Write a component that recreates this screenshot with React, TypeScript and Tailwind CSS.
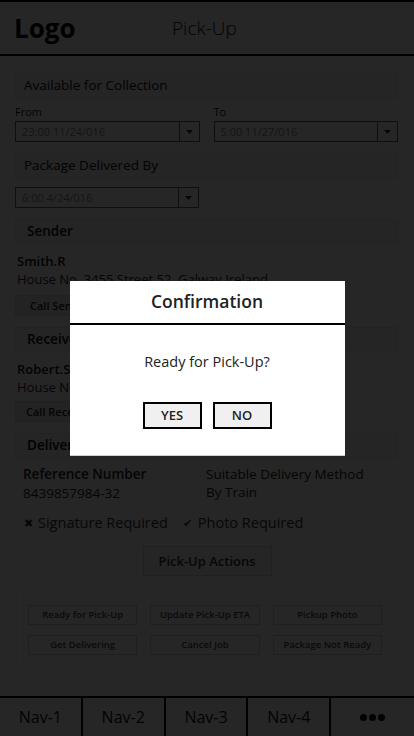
import React from "react";

const font = { fontFamily: "'Open Sans', Lato, 'Liberation Sans', sans-serif" };

function Select({ value }: { value: string }) {
  return (
    <div className="flex h-[21px] border border-[#666] bg-white">
      <div className="flex flex-1 items-center px-[6px] text-[11px] leading-none text-[#8a8a8a]">{value}</div>
      <div className="flex w-[20px] items-center justify-center border-l border-[#666]">
        <svg width="7" height="4" viewBox="0 0 7 4">
          <path d="M0 0 L7 0 L3.5 4 Z" fill="#333" />
        </svg>
      </div>
    </div>
  );
}

function SectionHead({ title, bold = false }: { title: string; bold?: boolean }) {
  return (
    <div
      className={`flex h-[25px] items-center border border-[#ececec] bg-[#f3f3f3] text-[13.5px] leading-none text-[#111] ${
        bold ? "pl-[11px] font-semibold" : "pl-[8px]"
      }`}
    >
      {title}
    </div>
  );
}

function SmallBtn({ label }: { label: string }) {
  return (
    <div className="flex h-[20px] items-center justify-center border border-[#cfcfcf] bg-white text-[9.5px] font-semibold leading-none text-[#444]">
      {label}
    </div>
  );
}

export default function App() {
  return (
    <div className="relative flex h-[736px] w-[414px] flex-col overflow-hidden bg-white" style={font}>
      {/* Header */}
      <div className="flex h-[56px] shrink-0 items-center border-b-2 border-t-2 border-black px-[14px]">
        <div className="w-[124px] text-[26px] font-bold leading-none text-black">Logo</div>
        <div className="ml-[34px] text-[19px] font-light leading-none text-[#111]">Pick-Up</div>
      </div>

      {/* Content */}
      <div className="flex flex-col pl-[15px] pr-[16px] pt-[17px]">
        <SectionHead title="Available for Collection" />
        <div className="mt-[7px] grid grid-cols-2 gap-x-[14px]">
          <div>
            <div className="mb-[3px] text-[11px] leading-[13px] text-[#111]">From</div>
            <Select value="23:00 11/24/016" />
          </div>
          <div>
            <div className="mb-[3px] text-[11px] leading-[13px] text-[#111]">To</div>
            <Select value="5:00 11/27/016" />
          </div>
        </div>

        <div className="mt-[11px]">
          <SectionHead title="Package Delivered By" />
        </div>
        <div className="mt-[9px] w-[184px]">
          <Select value="6:00  4/24/016" />
        </div>

        <div className="mt-[11px]">
          <SectionHead title="Sender" bold />
        </div>
        <div className="mt-[8px] pl-[2px] text-[13px] font-semibold leading-[18px] text-[#111]">Smith.R</div>
        <div className="pl-[2px] text-[13px] leading-[18px] text-[#222]">House No. 3455 Street 52, Galway Ireland</div>
        <div className="mt-[7px] flex h-[21px] w-[100px] items-center border border-[#dcdcdc] bg-[#ececec] pl-[14px] text-[11px] font-semibold leading-none text-[#222]">
          Call Sender
        </div>

        <div className="mt-[11px]">
          <SectionHead title="Receiver" bold />
        </div>
        <div className="mt-[8px] pl-[2px] text-[13px] font-semibold leading-[18px] text-[#111]">Robert.S</div>
        <div className="pl-[2px] text-[13px] leading-[18px] text-[#222]">House No. 12 Street 8, Dublin Ireland</div>
        <div className="mt-[5px] flex h-[21px] w-[100px] items-center border border-[#dcdcdc] bg-[#ececec] pl-[10px] text-[11px] font-semibold leading-none text-[#222]">
          Call Receiver
        </div>

        <div className="mt-[11px]">
          <SectionHead title="Delivery Details" bold />
        </div>
        <div className="mt-[7px] flex pl-[8px]">
          <div className="w-[183px]">
            <div className="text-[13.5px] font-semibold leading-[18px] text-[#222]">Reference Number</div>
            <div className="mt-[1px] text-[13.5px] leading-[18px] text-[#222]">8439857984-32</div>
          </div>
          <div>
            <div className="text-[13.5px] leading-[18px] text-[#222]">Suitable Delivery Method</div>
            <div className="text-[13.5px] leading-[18px] text-[#222]">By Train</div>
          </div>
        </div>
        <div className="mt-[12px] flex h-[18px] items-center pl-[9px] text-[14.5px] leading-[18px] text-[#333]">
          <span className="mr-[5px] text-[11px]">✖</span>
          <span>Signature Required</span>
          <span className="ml-[15px] mr-[6px] text-[11px]">✔</span>
          <span>Photo Required</span>
        </div>
        <div className="mt-[14px] flex justify-center pl-[1px]">
          <div className="flex h-[30px] w-[129px] items-center justify-center border border-[#d6d6d6] bg-[#f3f3f3] text-[13px] font-semibold leading-none text-[#333]">
            Pick-Up Actions
          </div>
        </div>
        <div className="ml-[1px] mt-[15px] border border-[#eeeeee] pb-[13px] pl-[11px] pr-[15px] pt-[13px]">
          <div className="grid grid-cols-3 gap-x-[13px] gap-y-[10px]">
            <SmallBtn label="Ready for Pick-Up" />
            <SmallBtn label="Update Pick-Up ETA" />
            <SmallBtn label="Pickup Photo" />
            <SmallBtn label="Get Delivering" />
            <SmallBtn label="Cancel Job" />
            <SmallBtn label="Package Not Ready" />
          </div>
        </div>
      </div>

      {/* Nav */}
      <div className="mt-auto grid h-[40px] shrink-0 grid-cols-5 border-t-2 border-black">
        {["Nav-1", "Nav-2", "Nav-3", "Nav-4"].map((n) => (
          <div key={n} className="flex items-center justify-center border-r-2 border-black text-[16px] leading-none text-[#111]">
            {n}
          </div>
        ))}
        <div className="flex items-center justify-center gap-[2px]">
          <span className="h-[7px] w-[7px] rounded-full bg-[#111]" />
          <span className="h-[7px] w-[7px] rounded-full bg-[#111]" />
          <span className="h-[7px] w-[7px] rounded-full bg-[#111]" />
        </div>
      </div>

      {/* Overlay */}
      <div className="absolute inset-0 flex items-center justify-center bg-black/85">
        <div className="w-[275px] border-b border-[#d0d0d0] bg-white">
          <div className="flex h-[44px] items-center justify-center border-b-2 border-black text-[17.5px] font-semibold leading-none text-[#222]">
            Confirmation
          </div>
          <div className="flex flex-col items-center pb-[26px] pt-[28px]">
            <div className="text-[14.5px] leading-[18px] text-[#222]">Ready for Pick-Up?</div>
            <div className="mt-[31px] flex gap-[11px]">
              <div className="flex h-[27px] w-[59px] items-center justify-center border-2 border-black bg-[#f0f0f0] text-[13px] font-semibold leading-none text-[#222]">
                YES
              </div>
              <div className="flex h-[27px] w-[59px] items-center justify-center border-2 border-black bg-[#f0f0f0] text-[13px] font-semibold leading-none text-[#222]">
                NO
              </div>
            </div>
          </div>
        </div>
      </div>
    </div>
  );
}
